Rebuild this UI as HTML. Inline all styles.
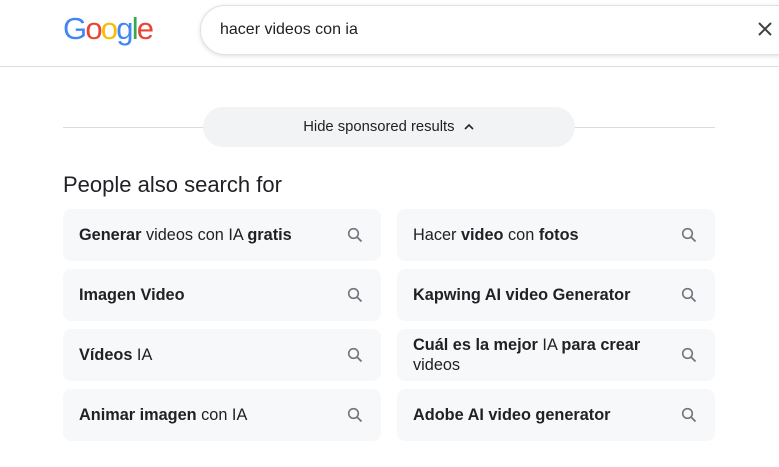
<!DOCTYPE html>
<html><head><style>
*{margin:0;padding:0;box-sizing:border-box}
body{width:779px;height:467px;overflow:hidden;background:#fff;font-family:"Liberation Sans",Arial,sans-serif;color:#202124;position:relative}
.logo{position:absolute;left:63px;top:11px;font-size:31px;letter-spacing:-1.8px;font-family:"Liberation Sans",sans-serif}
.search{position:absolute;left:200px;top:5px;width:620px;height:50px;border:1px solid #dfe1e5;border-radius:25px;box-shadow:0 1px 4px rgba(32,33,36,.15);background:#fff}
.search span{position:absolute;left:19px;top:15px;font-size:16px}
.x{position:absolute;left:757px;top:21px}
.hr{position:absolute;left:0;top:66px;width:779px;height:1px;background:#dadce0}
.line{position:absolute;left:63px;top:127px;width:652px;height:1px;background:#dadce0}
.pill{position:absolute;left:203px;top:107px;width:372px;height:40px;border-radius:20px;background:#f1f3f4;font-size:14.8px;text-align:center;line-height:40px}
h2{position:absolute;left:63px;top:172px;font-size:22px;font-weight:normal}
.c{position:absolute;width:318px;height:52px;border-radius:8px;background:#f7f8fa;font-size:16.3px;padding-left:16px;display:flex;align-items:center;padding-right:50px;line-height:20px}
.c svg{position:absolute;right:18px;top:18px}
</style></head><body>
<div class="logo"><span style="color:#4285f4">G</span><span style="color:#ea4335">o</span><span style="color:#fbbc05">o</span><span style="color:#4285f4">g</span><span style="color:#34a853">l</span><span style="color:#ea4335">e</span></div>
<div class="search"><span>hacer videos con ia</span></div>
<svg class="x" width="16" height="16" viewBox="0 0 16 16"><path d="M2 2L14 14M14 2L2 14" stroke="#3c4043" stroke-width="2"/></svg>
<div class="hr"></div>
<div class="line"></div>
<div class="pill">Hide sponsored results &nbsp;<svg width="12" height="8" viewBox="0 0 12 8"><path d="M2 6L6 2L10 6" stroke="#202124" stroke-width="1.6" fill="none"/></svg></div>
<h2>People also search for</h2>
<div class="c" style="left:63px;top:209px"><span><b>Generar</b> videos con IA <b>gratis</b></span><svg width="16" height="16" viewBox="0 0 16 16"><circle cx="6.5" cy="6.5" r="4.8" stroke="#70757a" stroke-width="1.6" fill="none"/><path d="M10 10L14.5 14.5" stroke="#70757a" stroke-width="1.8"/></svg></div>
<div class="c" style="left:397px;top:209px"><span>Hacer <b>video</b> con <b>fotos</b></span><svg width="16" height="16" viewBox="0 0 16 16"><circle cx="6.5" cy="6.5" r="4.8" stroke="#70757a" stroke-width="1.6" fill="none"/><path d="M10 10L14.5 14.5" stroke="#70757a" stroke-width="1.8"/></svg></div>
<div class="c" style="left:63px;top:269px"><span><b>Imagen Video</b></span><svg width="16" height="16" viewBox="0 0 16 16"><circle cx="6.5" cy="6.5" r="4.8" stroke="#70757a" stroke-width="1.6" fill="none"/><path d="M10 10L14.5 14.5" stroke="#70757a" stroke-width="1.8"/></svg></div>
<div class="c" style="left:397px;top:269px"><span><b>Kapwing AI video Generator</b></span><svg width="16" height="16" viewBox="0 0 16 16"><circle cx="6.5" cy="6.5" r="4.8" stroke="#70757a" stroke-width="1.6" fill="none"/><path d="M10 10L14.5 14.5" stroke="#70757a" stroke-width="1.8"/></svg></div>
<div class="c" style="left:63px;top:329px"><span><b>Vídeos</b> IA</span><svg width="16" height="16" viewBox="0 0 16 16"><circle cx="6.5" cy="6.5" r="4.8" stroke="#70757a" stroke-width="1.6" fill="none"/><path d="M10 10L14.5 14.5" stroke="#70757a" stroke-width="1.8"/></svg></div>
<div class="c" style="left:397px;top:329px"><span><b>Cuál es la mejor</b> IA <b>para crear</b> videos</span><svg width="16" height="16" viewBox="0 0 16 16"><circle cx="6.5" cy="6.5" r="4.8" stroke="#70757a" stroke-width="1.6" fill="none"/><path d="M10 10L14.5 14.5" stroke="#70757a" stroke-width="1.8"/></svg></div>
<div class="c" style="left:63px;top:389px"><span><b>Animar imagen</b> con IA</span><svg width="16" height="16" viewBox="0 0 16 16"><circle cx="6.5" cy="6.5" r="4.8" stroke="#70757a" stroke-width="1.6" fill="none"/><path d="M10 10L14.5 14.5" stroke="#70757a" stroke-width="1.8"/></svg></div>
<div class="c" style="left:397px;top:389px"><span><b>Adobe AI video generator</b></span><svg width="16" height="16" viewBox="0 0 16 16"><circle cx="6.5" cy="6.5" r="4.8" stroke="#70757a" stroke-width="1.6" fill="none"/><path d="M10 10L14.5 14.5" stroke="#70757a" stroke-width="1.8"/></svg></div>
</body></html>
